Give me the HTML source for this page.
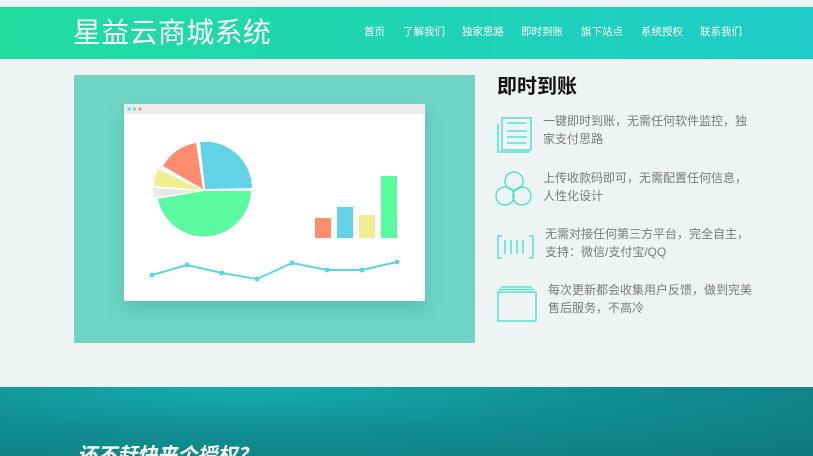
<!DOCTYPE html>
<html><head><meta charset="utf-8"><style>
*{margin:0;padding:0;box-sizing:border-box}
html,body{width:813px;height:456px;overflow:hidden}
body{background:#eef3f3;font-family:"Liberation Sans","Noto Sans CJK SC",sans-serif;position:relative}
.hdr{position:absolute;left:0;top:7px;width:813px;height:52px;background:linear-gradient(90deg,#20dd9e,#1ecbc8)}
.logo{position:absolute;left:73px;top:10px;font-size:28px;color:#fff;letter-spacing:0.3px;line-height:32px}
.nav{position:absolute;top:18px;font-size:10.5px;color:#fff;line-height:14px}
.ttl{position:absolute;left:497px;top:74px;font-size:20px;font-weight:bold;color:#111;line-height:26px}
.t{position:absolute;font-size:12px;color:#7a7a7a;line-height:18px;width:210px}
.bot{position:absolute;left:0;top:387px;width:813px;height:69px;background:radial-gradient(ellipse at 30% 0%,#15aeb0 0%,#118f93 45%,#0e7a7c 100%)}
.bot span{position:absolute;left:77px;top:52px;font-size:20px;font-weight:bold;font-style:italic;color:#fff}
</style></head><body>
<div class="hdr">
<div class="logo">星益云商城系统</div>
<div class="nav" style="left:364px">首页</div>
<div class="nav" style="left:403px">了解我们</div>
<div class="nav" style="left:462px">独家思路</div>
<div class="nav" style="left:521px">即时到账</div>
<div class="nav" style="left:581px">旗下站点</div>
<div class="nav" style="left:641px">系统授权</div>
<div class="nav" style="left:700px">联系我们</div>
</div>
<svg style="position:absolute;left:0;top:0" width="813" height="456">
<defs><filter id="sh" x="-20%" y="-20%" width="140%" height="160%"><feDropShadow dx="0" dy="8" stdDeviation="8" flood-color="#2a9a8a" flood-opacity="0.35"/></filter></defs>
<rect x="74" y="75" width="401" height="268" fill="#6fd3c5"/>
<rect x="124" y="104" width="301" height="197" fill="#fff" filter="url(#sh)"/>
<rect x="124" y="104" width="301" height="10" fill="#ececec"/>
<circle cx="129" cy="109" r="1.6" fill="#5fd3e6"/><circle cx="134.5" cy="109" r="1.6" fill="#5cf5a0"/><circle cx="140" cy="109" r="1.6" fill="#ff8a6e"/>
<path d="M204,191 L251,191 A47,47 0 0 1 158,199 Z" fill="#5bfaa0"/>
<path d="M205,189 L200,142 A47,47 0 0 1 252,188 Z" fill="#62d3e6"/>
<path d="M203,189 L196,143 A46,46 0 0 0 163,166 Z" fill="#ff8c6f"/>
<path d="M202,190 L158,169 A48,48 0 0 0 154,186 Z" fill="#f0ee92"/>
<path d="M200,191 L153,188 A47,47 0 0 0 154,197 Z" fill="#e8e8e8"/>
<rect x="315" y="218" width="16" height="20" fill="#ff8c6f"/>
<rect x="337" y="207" width="16" height="31" fill="#62d3e6"/>
<rect x="359" y="215" width="16" height="23" fill="#f0ee92"/>
<rect x="381" y="176" width="16" height="62" fill="#5bfaa0"/>
<polyline points="152,275 187,265 222,273 257,279 292,263 327,270 362,270 397,262" fill="none" stroke="#5fd3e6" stroke-width="2"/>
<g fill="#5fd3e6"><circle cx="152" cy="275" r="2.5"/><circle cx="187" cy="265" r="2.5"/><circle cx="222" cy="273" r="2.5"/><circle cx="257" cy="279" r="2.5"/><circle cx="292" cy="263" r="2.5"/><circle cx="327" cy="270" r="2.5"/><circle cx="362" cy="270" r="2.5"/><circle cx="397" cy="262" r="2.5"/></g>
<g fill="none" stroke="#3ee0c8" stroke-width="1.3">
<rect x="502" y="118" width="29" height="32"/>
<path d="M498,124 V152 H530"/>
<path d="M507,123 H526 M507,131 H527 M507,137 H527 M507,143 H526"/>
<circle cx="514" cy="181" r="9"/><circle cx="505" cy="196" r="9"/><circle cx="522" cy="196" r="9"/>
<path d="M502,236 H498 V258 H502 M529,236 H533 V258 H529 M505,240 V254 M511,240 V254 M517,240 V254 M523,240 V254"/>
<rect x="498" y="292" width="38" height="29"/>
<path d="M501,287 H532 M499,289.5 H534"/>
</g>
</svg>
<div class="ttl">即时到账</div>
<div class="t" style="left:543px;top:112px">一键即时到账，无需任何软件监控，独家支付思路</div>
<div class="t" style="left:543px;top:169px">上传收款码即可，无需配置任何信息，人性化设计</div>
<div class="t" style="left:545px;top:225px">无需对接任何第三方平台，完全自主，支持：微信/支付宝/QQ</div>
<div class="t" style="left:548px;top:281px">每次更新都会收集用户反馈，做到完美售后服务，不高冷</div>
<div class="bot"><span>还不赶快来个授权？</span></div>
</body></html>
